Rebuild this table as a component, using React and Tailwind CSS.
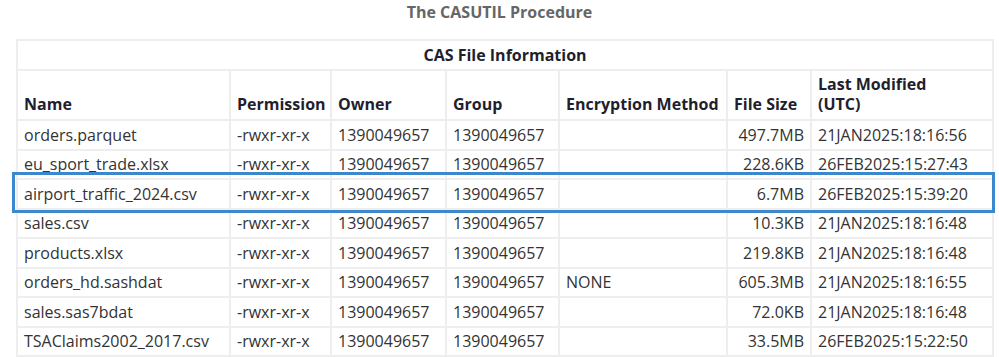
import React from "react";

const rows = [
  ["orders.parquet", "", "497.7MB", "21JAN2025:18:16:56"],
  ["eu_sport_trade.xlsx", "", "228.6KB", "26FEB2025:15:27:43"],
  ["airport_traffic_2024.csv", "", "6.7MB", "26FEB2025:15:39:20"],
  ["sales.csv", "", "10.3KB", "21JAN2025:18:16:48"],
  ["products.xlsx", "", "219.8KB", "21JAN2025:18:16:48"],
  ["orders_hd.sashdat", "NONE", "605.3MB", "21JAN2025:18:16:55"],
  ["sales.sas7bdat", "", "72.0KB", "21JAN2025:18:16:48"],
  ["TSAClaims2002_2017.csv", "", "33.5MB", "26FEB2025:15:22:50"],
];

const cell = "border-2 border-[#eeeeee] px-1.5 text-left whitespace-nowrap";
const head = cell + " leading-[20px] pb-[5px]";

const App = () => {
  return (
    <div className="w-[999px] h-[357px] bg-white font-['Open_Sans',sans-serif] text-[16px] text-[#333333] overflow-hidden">
      <p className="h-[28px] leading-[24px] text-center font-bold text-[16px] text-[#666666]">
        The CASUTIL Procedure
      </p>
      <div className="relative ml-[16px] mt-[11px] w-[976px]">
        <table className="w-full table-fixed border-collapse">
          <colgroup>
            <col className="w-[213px]" />
            <col className="w-[101px]" />
            <col className="w-[115px]" />
            <col className="w-[113px]" />
            <col className="w-[168px]" />
            <col className="w-[84px]" />
            <col className="w-[182px]" />
          </colgroup>
          <thead className="font-bold text-[#1f1f2e]">
            <tr className="h-[30px]">
              <th colSpan={7} className={cell + " text-center leading-[22px]"}>
                <span className="block text-center">CAS File Information</span>
              </th>
            </tr>
            <tr className="h-[50px] align-bottom">
              <th className={head}>Name</th>
              <th className={head}>Permission</th>
              <th className={head}>Owner</th>
              <th className={head}>Group</th>
              <th className={head}>Encryption Method</th>
              <th className={head}>File Size</th>
              <th className={head + " whitespace-normal"}>
                Last Modified
                <br />
                (UTC)
              </th>
            </tr>
          </thead>
          <tbody>
            {rows.map((r) => (
              <tr key={r[0]} className="h-[29.5px] leading-[22px]">
                <td className={cell}>{r[0]}</td>
                <td className={cell}>-rwxr-xr-x</td>
                <td className={cell}>1390049657</td>
                <td className={cell}>1390049657</td>
                <td className={cell}>{r[1]}</td>
                <td className={cell + " text-right"}>{r[2]}</td>
                <td className={cell}>{r[3]}</td>
              </tr>
            ))}
          </tbody>
        </table>
        <div className="absolute left-[-4px] top-[133px] w-[983px] h-[41px] border-[3px] border-[#3d87cc]" />
      </div>
    </div>
  );
};

export default App;
